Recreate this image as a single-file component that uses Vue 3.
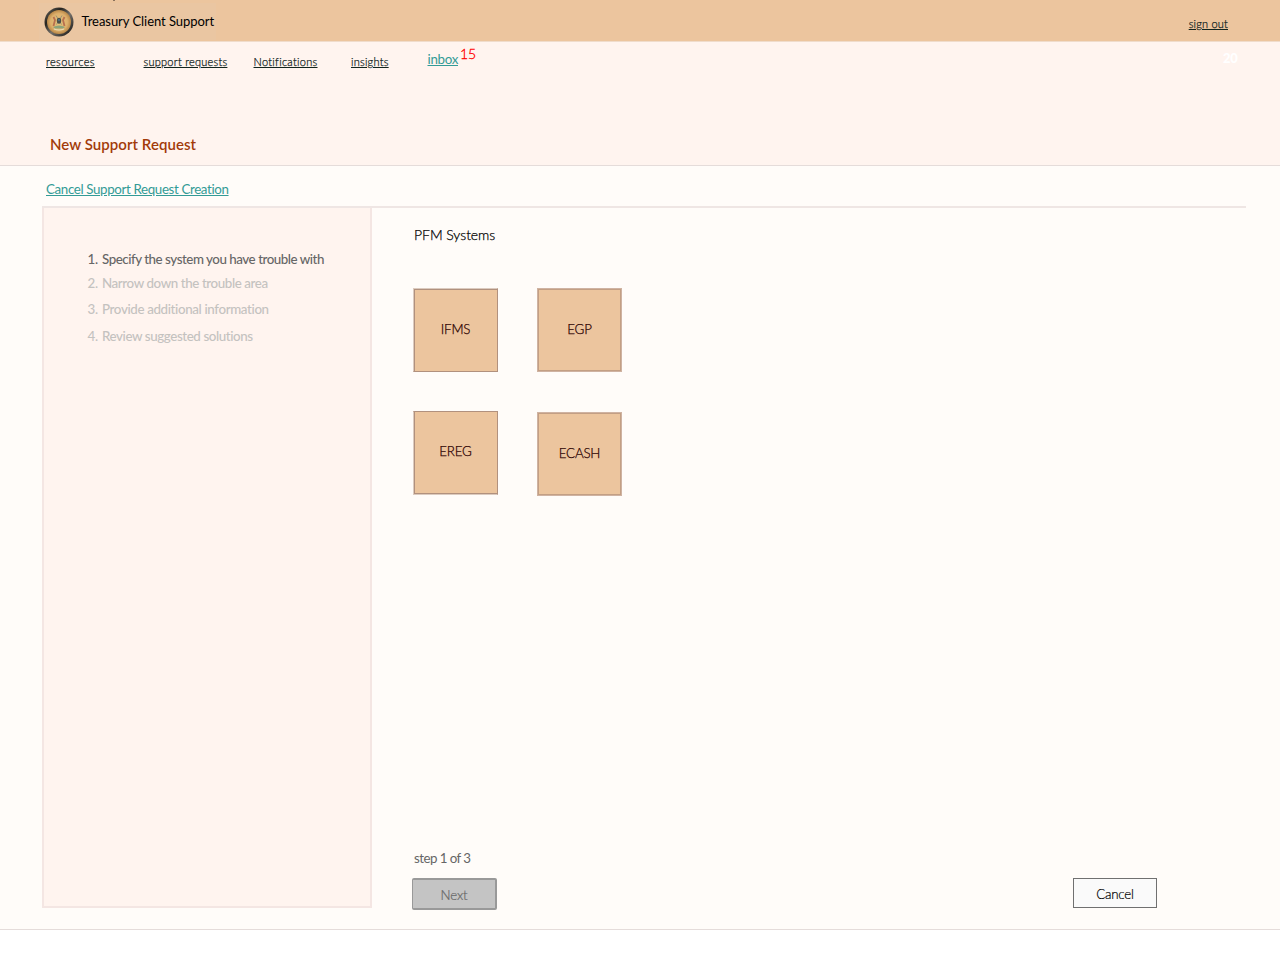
<script setup>
const steps = [
  'Specify the system you have trouble with',
  'Narrow down the trouble area',
  'Provide additional information',
  'Review suggested solutions',
]
const systems = ['IFMS', 'EGP', 'EREG', 'ECASH']
</script>

<template>
  <div class="page">
    <header class="topbar">
      <div class="brand">
        <svg class="crest" width="30" height="30" viewBox="0 0 30 30">
          <defs>
            <linearGradient id="rim" x1="0" y1="0" x2="1" y2="1">
              <stop offset="0" stop-color="#77736a" />
              <stop offset=".3" stop-color="#25231f" />
              <stop offset=".55" stop-color="#74706a" />
              <stop offset="1" stop-color="#080807" />
            </linearGradient>
            <radialGradient id="gold">
              <stop offset="0" stop-color="#e6c67d" />
              <stop offset=".7" stop-color="#deb06c" />
              <stop offset="1" stop-color="#b88747" />
            </radialGradient>
          </defs>
          <circle cx="15" cy="15" r="14.5" fill="url(#rim)" />
          <circle cx="15" cy="15" r="12" fill="url(#gold)" />
          <path d="M9.5 10l1.5 3-1.5 6M20.5 10l-1.5 3 1.5 6" fill="none" stroke="#b8704f" stroke-width="1.8" />
          <path d="M12 8.5l5.5 9M18 8.5l-5.5 9" stroke="#8a8873" stroke-width=".8" />
          <ellipse cx="15" cy="13.7" rx="2.2" ry="3" fill="#4b5049" />
          <path d="M14 13h2" stroke="#5687aa" stroke-width="1.2" />
          <path d="M9 20q6-3 12 0l-2 1.5h-8z" fill="#8ba37b" />
          <path d="M10 22q5 2 10 0" fill="none" stroke="#e8ddb7" stroke-width="1.2" />
        </svg>
        <span class="brand-name">Treasury Client Support</span>
      </div>
      <i class="speck"></i>
      <a class="small sign-out">sign out</a>
    </header>

    <section class="masthead">
      <nav class="nav">
        <a class="small resources">resources</a>
        <a class="small requests">support requests</a>
        <a class="small notifications">Notifications</a>
        <a class="small insights">insights</a>
        <a class="inbox">inbox</a>
        <span class="unread">15</span>
        <span class="total">20</span>
      </nav>
      <h1>New Support Request</h1>
    </section>

    <main>
      <div class="cancel-row"><a class="cancel-link">Cancel Support Request Creation</a></div>
      <div class="workspace">
        <aside>
          <ol>
            <li v-for="(step, i) in steps" :key="step" :class="{ current: i === 0 }">
              <span class="num">{{ i + 1 }}.</span><span class="step-text">{{ step }}</span>
            </li>
          </ol>
        </aside>
        <section class="content">
          <h2>PFM Systems</h2>
          <div class="tiles">
            <button v-for="s in systems" :key="s" class="tile" :class="s.toLowerCase()"><span>{{ s }}</span></button>
          </div>
          <p class="progress">step 1 of 3</p>
          <div class="actions">
            <button class="next">Next</button>
            <button class="cancel">Cancel</button>
          </div>
        </section>
      </div>
    </main>
  </div>
</template>

<style>
body { background: #fff; }
</style>

<style scoped>
* { box-sizing: border-box; }
.page { width: 1280px; height: 960px; overflow: hidden; font-family: Lato, "Liberation Sans", sans-serif; font-variant-ligatures: none; white-space: nowrap; background: #fff; }
.topbar { position: relative; height: 42px; background: #ecc59e; border-bottom: 1px solid #f0dccb; display: flex; justify-content: space-between; padding: 0 52px 0 39px; }
.brand { display: flex; width: 177px; height: 37px; margin-top: 3px; padding-left: 5px; background: #eac6a2; }
.crest { margin-top: 4px; flex: none; filter: blur(.35px); }
.brand-name { margin: 8px 0 0 7.5px; font-size: 13px; line-height: 20px; letter-spacing: -.05px; color: #000; }
.speck { position: absolute; left: 113px; top: 0; width: 2px; height: 1px; background: #8b725c; }
.small { font-size: 11px; line-height: 16px; font-weight: 300; letter-spacing: .25px; color: #12241e; text-decoration: underline; -webkit-text-stroke: .25px currentColor; }
.sign-out { margin-top: 16px; letter-spacing: .2px; }
.masthead { height: 124px; background: #fff4ef; border-bottom: 1px solid #e5dcda; }
.nav { display: flex; height: 92px; padding: 12px 42px 0 46px; }
.resources { width: 97.5px; letter-spacing: .4px; }
.requests { width: 110px; }
.notifications { width: 97.5px; letter-spacing: .3px; }
.insights { width: 76.5px; }
.inbox { margin: -5px 2px 0 0; font-size: 13.33px; line-height: 20px; letter-spacing: -.3px; color: #339b96; text-decoration: underline; }
.unread { margin-top: -10px; font-size: 14px; line-height: 20px; font-weight: 300; color: #f00; -webkit-text-stroke: .3px currentColor; }
.total { margin: -6px .5px 0 auto; font-size: 13px; line-height: 20px; font-weight: 900; letter-spacing: -.3px; color: #fff; }
h1 { margin: 0 0 0 50px; font-size: 15px; line-height: 20px; font-weight: 600; letter-spacing: .05px; color: #a23b09; }
main { height: 764px; background: #fffcf9; border-bottom: 1px solid #e5dcda; padding-left: 42px; }
.cancel-row { height: 40px; padding: 13px 0 0 4px; }
.cancel-link { display: inline-block; vertical-align: top; font-size: 13.33px; line-height: 20px; letter-spacing: -.36px; color: #339b96; text-decoration: underline; }
.workspace { display: flex; width: 1204px; height: 702px; border-top: 2px solid #efe6e4; }
aside { width: 330px; height: 700px; background: #fff4ef; border: 2px solid #f4e6e3; border-top: 0; }
ol { list-style: none; margin: 0; padding: 41px 0 0 43.5px; }
li { display: flex; height: 26px; font-size: 13.33px; line-height: 20px; letter-spacing: -.4px; font-weight: 500; color: #c4c2bf; }
li.current { height: 24px; letter-spacing: -.46px; color: #666; }
li:nth-child(3) { letter-spacing: -.36px; }
li:last-child { margin-top: 1px; }
.num { width: 14.5px; letter-spacing: -.2px; }
.content { flex: 1; padding-left: 42px; }
h2 { margin: 17px 0 0; font-size: 14px; line-height: 20px; font-weight: 300; letter-spacing: -.05px; color: #000; -webkit-text-stroke: .25px currentColor; }
.tiles { display: grid; grid-template-columns: 85px 85px; grid-template-rows: 84px 84px; column-gap: 39px; row-gap: 38px; margin: 43px 0 0 -1px; }
.tile { width: 85px; height: 84px; padding: 0 0 2px; font: 300 13.33px/20px Lato, sans-serif; letter-spacing: -.2px; color: #2b0000; background: #ecc59e; border: 1px solid #cfb3a2; box-shadow: inset 0 0 0 1px #c39f84; -webkit-text-stroke: .25px currentColor; }
.ifms, .ereg { border-color: #dccbbf #b1917e #b1917e #dccbbf; box-shadow: inset 1px 1px 0 #b1917e; }
.ereg { margin-top: 1px; height: 84px; padding-bottom: 4px; border-color: #b1917e #b1917e #dccbbf #dccbbf; box-shadow: inset 1px -1px 0 #b1917e; }
.ecash { margin-top: 2px; }
.progress { margin: 354px 0 0; font-size: 13.33px; line-height: 20px; letter-spacing: -.55px; color: #666; }
.actions { display: flex; justify-content: space-between; width: 745px; margin: 10px 0 0 -2px; }
.actions button { padding: 0; font: 300 13.33px/20px Lato, sans-serif; -webkit-text-stroke: .2px currentColor; }
.actions .next { width: 85px; height: 32px; padding-top: 1px; letter-spacing: -.1px; color: #666; background: #c4c4c4; border: 2px solid #999; border-left-width: 1px; border-radius: 2px; }
.actions .cancel { width: 84px; height: 30px; padding-top: 1px; letter-spacing: -.2px; color: #000; background: #fafafa; border: 1px solid #707070; }
</style>
